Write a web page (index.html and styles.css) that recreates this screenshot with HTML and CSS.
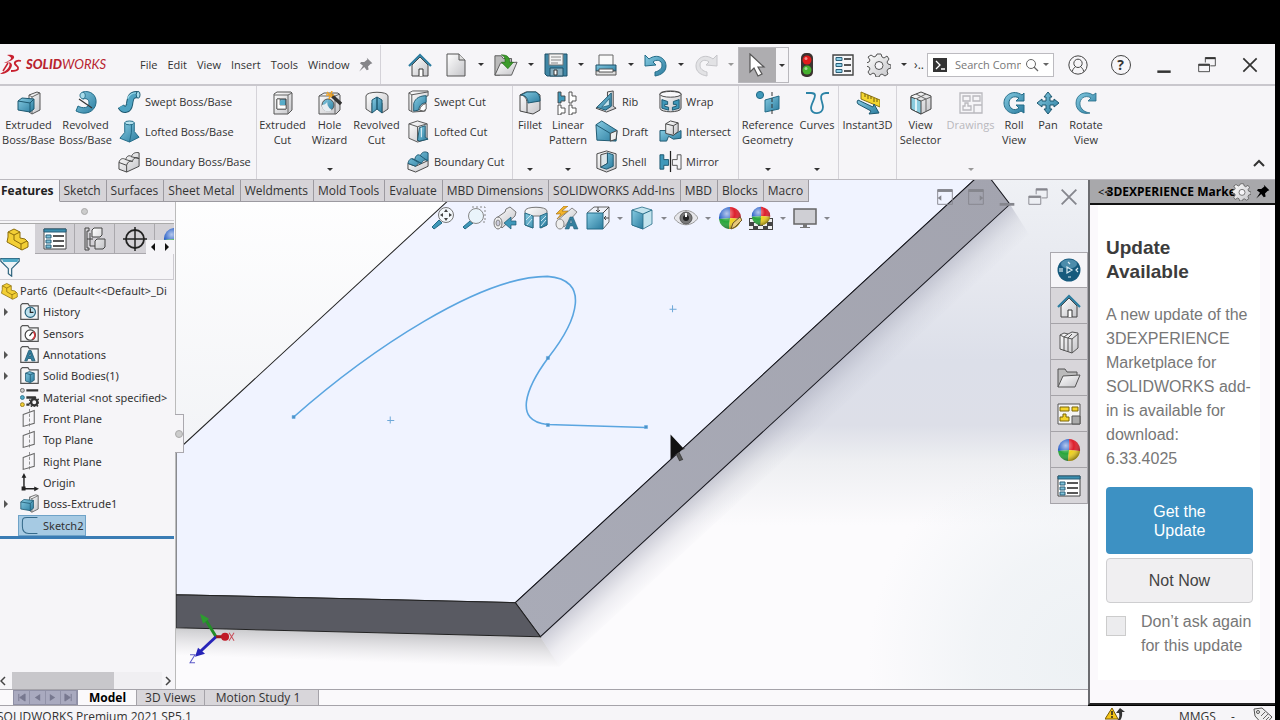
FILE: index.html
```
<!DOCTYPE html>
<html lang="en">
<head>
<meta charset="utf-8">
<title>SOLIDWORKS Premium 2021</title>
<link rel="stylesheet" href="styles.css">
</head>
<body>
<svg class="defs" aria-hidden="true">
  <defs>
    <linearGradient id="blue" x1="0" y1="0" x2="1" y2="1"><stop offset="0" stop-color="#86cbe2"/><stop offset="1" stop-color="#2b7c9f"/></linearGradient>
    <linearGradient id="grey" x1="0" y1="0" x2="1" y2="1"><stop offset="0" stop-color="#ffffff"/><stop offset="1" stop-color="#c4c4c8"/></linearGradient>
    <radialGradient id="shine" cx=".35" cy=".3" r=".75"><stop offset="0" stop-color="#fff" stop-opacity=".65"/><stop offset=".5" stop-color="#fff" stop-opacity="0"/><stop offset="1" stop-color="#000" stop-opacity=".45"/></radialGradient>
  </defs>
  <symbol id="i-extrude" viewBox="0 0 24 24"><path d="M12 4l8-3 3 1v17l-8 4-3-2z" fill="url(#grey)" stroke="#555"/><path d="M15 6l8-4M15 6v17M12 4l3 2" fill="none" stroke="#666"/><path d="M1 10l4-3 12 1v10l-4 3-12-2z" fill="url(#blue)" stroke="#1d5870"/><path d="M1 10l12 2v9M13 12l4-4" fill="none" stroke="#1d5870"/></symbol>
  <symbol id="i-revolve" viewBox="0 0 24 24"><path d="M9 1C16-1 23 4 22 12 21 21 11 25 2 20l2-5c5 3 11 2 11-3 0-4-3-5-6-4z" fill="url(#blue)" stroke="#236b87"/><path d="M9 1c-4 1-4 6 0 7 3-1 3-6 0-7z" fill="#a8ddec" stroke="#236b87"/><path d="M5 8l13 9" stroke="#333" stroke-width="1.2"/></symbol>
  <symbol id="i-swept" viewBox="0 0 24 24"><path d="M3 17c3 5 8 4 9-2 1-7 2-11 9-10" fill="none" stroke="#1d5870" stroke-width="7.500"/><path d="M3 17c3 5 8 4 9-2 1-7 2-11 9-10" fill="none" stroke="#4fa3c2" stroke-width="5.500"/><path d="M10 9c2-5 5-6 9-6" stroke="#97d5e6" stroke-width="1.500" fill="none"/><ellipse cx="21" cy="5" rx="2" ry="3.500" fill="#a8ddec" stroke="#1d5870"/></symbol>
  <symbol id="i-loft" viewBox="0 0 24 24"><path d="M7 3v10l-5 6 10 4 10-5-5-6V3z" fill="url(#blue)" stroke="#236b87"/><path d="M12 23l2-10V4" stroke="#236b87" fill="none"/><ellipse cx="12" cy="3" rx="5" ry="2" fill="#b7e2ee" stroke="#236b87"/></symbol>
  <symbol id="i-boundary" viewBox="0 0 24 24"><path d="M1 13c1-4 4-5 7-3 1-4 4-5 6-3 1-4 5-5 8-4v14L9 23l-8-3z" fill="url(#grey)" stroke="#444"/><path d="M1 13l8 3c1-4 4-5 6-4 1-4 4-5 7-3M9 16v7M8 10l7 2M14 7l8 2" fill="none" stroke="#444"/></symbol>
  <symbol id="i-boundcut" viewBox="0 0 24 24"><path d="M1 14l8 3 13-6v6L9 23l-8-3z" fill="url(#grey)" stroke="#444"/><path d="M1 14c1-5 4-6 7-4 1-5 4-6 6-4 1-4 5-5 8-3v8c-3-1-5-1-7 3-2-1-4 0-6 3z" fill="url(#blue)" stroke="#1d5870"/><path d="M8 10l7 4M14 6l7 5M5 9l7 4" fill="none" stroke="#1d5870"/></symbol>
  <symbol id="i-cut" viewBox="0 0 24 24"><path d="M3 3l3-2h14l1 1v17l-4 4H3z" fill="url(#grey)" stroke="#555"/><path d="M3 4h14v19M17 4l4-2" fill="none" stroke="#666"/><path d="M6 8h9v10H6z" fill="url(#blue)" stroke="#333"/><path d="M9 8v6h6v4H6V8z" fill="#fff" stroke="#555" stroke-width=".7"/><path d="M9 10h5v4H9z" fill="#57acc9"/></symbol>
  <symbol id="i-hole" viewBox="0 0 24 24"><path d="M1 5l5-3h14l2 2v15l-4 4H1z" fill="url(#grey)" stroke="#555"/><path d="M1 5h16v18M17 5l5-2" fill="none" stroke="#666"/><circle cx="10" cy="14" r="6" fill="url(#blue)" stroke="#555"/><path d="M10 8a6 6 0 0 1-6 6 6 6 0 0 0 10 5 8 8 0 0 1-4-11z" fill="#e8eef2"/><path d="M12 3l11 10" stroke="#333" stroke-width="3.500"/><path d="M9 1l5 5M14 0l-3 8M8 4h8" stroke="#eda52d" stroke-width="1.600"/></symbol>
  <symbol id="i-revcut" viewBox="0 0 24 24"><path d="M1 5c0-5 22-5 22 0v13l-6 4V12l-5-5-5 5v10l-6-4z" fill="url(#grey)" stroke="#555"/><path d="M12 6v12l-5 4V9zM12 6v12l5 4V9z" fill="url(#blue)" stroke="#1d5870"/></symbol>
  <symbol id="i-sweptcut" viewBox="0 0 24 24"><path d="M2 3l4-2h16v5l-3 1v15L6 23l-4-2z" fill="url(#grey)" stroke="#555"/><path d="M2 3l3 2v17M5 5l17-3" stroke="#555" fill="none"/><path d="M7 22V14C9 8 14 6 20 6v7c-5 1-7 3-8 8z" fill="url(#blue)" stroke="#1d5870"/><path d="M13 21c1-4 3-6 7-7v6l-3 2z" fill="#fff" stroke="#555"/></symbol>
  <symbol id="i-loftcut" viewBox="0 0 24 24"><path d="M2 4l9-3 10 3v16l-10 3-9-4z" fill="url(#grey)" stroke="#555"/><path d="M2 4l9 3v15M11 7l10-3" stroke="#555" fill="none"/><path d="M13 8l6-2v12l3 2-9 2-2-1z" fill="url(#blue)" stroke="#1d5870"/><path d="M15 8v10" stroke="#e8f6fa"/></symbol>
  <symbol id="i-fillet" viewBox="0 0 24 24"><path d="M2 4l6-3h10l4 3v15l-7 4-13-3z" fill="url(#grey)" stroke="#444"/><path d="M9 22V12C9 7 6 4 2 4" fill="none" stroke="#444"/><path d="M3 4l6-3h9c3 2 4 5 4 9l-12 2c0-5-3-8-7-8z" fill="url(#blue)" stroke="#1d5870"/></symbol>
  <symbol id="i-pattern" viewBox="0 0 24 24"><g stroke="#444" stroke-width=".9"><path d="M2 1h3v4h4v5H5v2H2z" fill="#3f98ba"/><path d="M13 1h3v4h4v5h-4v2h-3zM2 14h3v3h4v5H5v2H2zM13 14h3v3h4v5h-4v2h-3z" fill="#fff"/></g></symbol>
  <symbol id="i-rib" viewBox="0 0 24 24"><path d="M13 2l6-1v16l3 2-10 4-11-4 5-4h7z" fill="url(#grey)" stroke="#444"/><path d="M2 18L17 3v14l-6 4z" fill="url(#blue)" stroke="#1d5870"/><path d="M7 18l8-9v7z" fill="#c8e6f0" stroke="#1d5870" stroke-width=".7"/></symbol>
  <symbol id="i-draft" viewBox="0 0 24 24"><path d="M1 5l6-4 16 10-1 11-20-1z" fill="url(#blue)" stroke="#1d5870"/><path d="M1 5l15 9v8" fill="none" stroke="#1d5870"/><path d="M16 14l7-3-1 9-6 2z" fill="#eee" stroke="#444"/></symbol>
  <symbol id="i-shell" viewBox="0 0 24 24"><path d="M2 4l10-3 10 3v15l-10 4-10-4z" fill="url(#grey)" stroke="#444"/><path d="M6 5l7-2v11l-7 4z" fill="#dce6ea" stroke="#444"/><path d="M13 3l6 2v12l-7 3-6-2 7-4z" fill="url(#blue)" stroke="#1d5870"/></symbol>
  <symbol id="i-wrap" viewBox="0 0 24 24"><path d="M1 4c0-4 22-4 22 0v15c0 5-22 5-22 0z" fill="url(#grey)" stroke="#444"/><ellipse cx="12" cy="4.500" rx="11" ry="3" fill="#f8f8fa" stroke="#444"/><path d="M3 10l6 2v3H6v2l4 1v3l-7-2zM21 10l-6 2v3h3v2l-4 1v3l7-2z" fill="#3f98ba" stroke="#1d5870"/></symbol>
  <symbol id="i-intersect" viewBox="0 0 24 24"><path d="M1 11h8l5 5 9-5v8l-8 1-5-3-2 5H1z" fill="url(#blue)" stroke="#1d5870"/><path d="M7 4l5-3 8 2v9l-5 4-8-2z" fill="url(#grey)" stroke="#444"/><path d="M7 4l8 2v9M15 6l5-3" stroke="#444" fill="none"/></symbol>
  <symbol id="i-mirror" viewBox="0 0 24 24"><path d="M1 5h4v5h5v6H5v4H1z" fill="#3f98ba" stroke="#1d5870"/><path d="M23 5h-4v5h-5v6h5v4h4z" fill="#f5f5f7" stroke="#555"/><path d="M12 1v22" stroke="#222" stroke-width="1.300"/></symbol>
  <symbol id="i-refgeo" viewBox="0 0 24 24"><circle cx="4" cy="4" r="3.600" fill="#3f98ba" stroke="#236b87"/><path d="M9 9l14-4v13L9 21z" fill="url(#blue)" stroke="#236b87"/><path d="M16 1v22" stroke="#333" stroke-dasharray="4 2"/></symbol>
  <symbol id="i-curves" viewBox="0 0 24 24"><path d="M1 2h5c9 0 0 9 0 15 0 7 12 7 12-1 0-5-6-13 3-14h3" fill="none" stroke="#2c83a6" stroke-width="1.800"/></symbol>
  <symbol id="i-instant" viewBox="0 0 24 24"><path d="M5 1l19 8v7L5 8z" fill="#f4d62f" stroke="#8c7415"/><path d="M9 3v3M12 4v4M15 5v3M18 7v4M21 8v3" stroke="#6e5a0e"/><path d="M1 11l1-2 15 7 1-3 5 9-10 1 2-3-13-7z" fill="url(#blue)" stroke="#1d5870"/></symbol>
  <symbol id="i-viewsel" viewBox="0 0 24 24"><path d="M2 5l10-4 10 4v13l-10 5-10-5z" fill="url(#grey)" stroke="#444"/><path d="M2 6l10 4v13l-10-5z" fill="#8accdf" stroke="#444"/><path d="M7 8v12" stroke="#dff2f8" stroke-width="2"/><path d="M12 10l10-4M7 3l10 5v12M17 3L7 8" fill="none" stroke="#666"/></symbol>
  <symbol id="i-drawings" viewBox="0 0 24 24"><path d="M1 2h22v20H1zM4 5h7v5H4zM14 5h7v5h-7zM4 19v-4h2v-3h3v3h3v4zM15 14h8v8h-8z" fill="none" stroke="currentColor" stroke-width="1.300"/></symbol>
  <symbol id="i-roll" viewBox="0 0 24 24"><path d="M22 22v-8h-8l3 3c-5 4-10 0-10-5s5-8 10-5l-3 3h8V2l-2 2C11-2 2 4 2 12s9 14 17 8z" fill="url(#blue)" stroke="#236b87"/></symbol>
  <symbol id="i-pan" viewBox="0 0 24 24"><path d="M12 1l4 5h-2v4h4V8l5 4-5 4v-2h-4v4h2l-4 5-4-5h2v-4H6v2l-5-4 5-4v2h4V6H8z" fill="url(#blue)" stroke="#1d5870"/></symbol>
  <symbol id="i-rotate" viewBox="0 0 24 24"><path d="M22 2v8h-8l3-3C11 3 5 8 6 14c1 4 4 7 10 8C8 24 2 19 2 12 2 3 12-1 19 4z" fill="url(#blue)" stroke="#236b87" stroke-width=".8"/></symbol>
  <symbol id="i-home" viewBox="0 0 24 24"><path d="M4 12v11h16V12l-8-8z" fill="url(#grey)" stroke="#444"/><path d="M1 13L12 2l11 11" fill="none" stroke="#2b7c9f" stroke-width="2.200"/><path d="M11 23v-7h4v7" fill="#fff" stroke="#333"/></symbol>
  <symbol id="i-new" viewBox="0 0 24 24"><path d="M3 1h12l6 6v16H3z" fill="url(#grey)" stroke="#555"/><path d="M15 1v6h6" fill="#ddd" stroke="#555"/></symbol>
  <symbol id="i-open" viewBox="0 0 26 24"><path d="M1 2h7l2 3h9v6L6 23H1z" fill="#bbb" stroke="#555"/><path d="M7 10l18-1-6 14H1z" fill="url(#grey)" stroke="#555"/><path d="M8 1c7 0 9 3 9 8h4l-6 7-7-7h4c0-4 0-6-4-8z" fill="#3c9c2b" stroke="#246b18" stroke-width=".7"/></symbol>
  <symbol id="i-save" viewBox="0 0 24 24"><path d="M1 1h22v22H3l-2-2z" fill="#3f86a5" stroke="#1d4e66"/><path d="M5 1h14v11H5z" fill="#f4f4f4" stroke="#777"/><path d="M7 4h10M7 7h10M7 10h7" stroke="#888"/><path d="M6 15h13v8H6z" fill="#86adbe" stroke="#1d4e66"/><path d="M10 17h3v5h-3z" fill="#fff" stroke="#333"/></symbol>
  <symbol id="i-print" viewBox="0 0 24 24"><path d="M5 2h14v11H5z" fill="#fafafa" stroke="#666"/><path d="M2 12h20v6H2z" fill="url(#blue)" stroke="#1d4e66"/><path d="M2 18h20v4H2z" fill="#ddd" stroke="#555"/><path d="M5 16h14v3H5z" fill="#fff" stroke="#555"/></symbol>
  <symbol id="i-undo" viewBox="0 0 24 24"><path d="M1 2l4 4C13 0 22 5 22 13c0 6-5 9-11 10v-4c4-1 7-3 7-7 0-5-6-6-9-3l3 3-11 1z" fill="url(#blue)" stroke="#236b87"/></symbol>
  <symbol id="i-redo" viewBox="0 0 24 24"><path d="M23 2l-4 4C11 0 2 5 2 13c0 6 5 9 11 10v-4c-4-1-7-3-7-7 0-5 6-6 9-3l-3 3 11 1z" fill="#e2e2e5" stroke="#c6c6ca"/></symbol>
  <symbol id="i-arrow" viewBox="0 0 24 24"><path d="M4 1v18l4-4 4 8 4-2-4-7h6z" fill="#fff" stroke="#555" stroke-width="1.200"/></symbol>
  <symbol id="i-traffic" viewBox="0 0 24 24"><rect x="6" y="0" width="12" height="24" rx="5" fill="#3b3330"/><circle cx="12" cy="7" r="4.500" fill="#e11b1b"/><circle cx="12" cy="17" r="4.500" fill="#45b02f"/><circle cx="11" cy="5.500" r="1.500" fill="#fff" opacity=".5"/><circle cx="11" cy="15.500" r="1.500" fill="#fff" opacity=".5"/></symbol>
  <symbol id="i-options" viewBox="0 0 24 24"><path d="M2 2h20v20H2z" fill="#f7f7f9" stroke="#444" stroke-width="1.400"/><path d="M5 4.500h6v3H5zM5 10.500h6v3H5zM5 16.500h6v3H5z" fill="#8fd0e8" stroke="#2b5f78"/><path d="M13 6h7M13 12h7M13 18h7" stroke="#222" stroke-width="1.500"/></symbol>
  <symbol id="i-gear" viewBox="0 0 24 24"><path d="M10 1h4l1 3 2 1 3-2 2 3-2 3 1 2 3 1v3l-3 1-1 2 1 3-3 2-3-2-2 1-1 2h-3l-1-3-2-1-3 2-2-3 2-3-1-2-3-1v-3l3-1 1-2-2-3 3-2 3 2 2-1z" fill="url(#grey)" stroke="#555"/><circle cx="12" cy="12.500" r="4" fill="#f6f5f8" stroke="#555"/></symbol>
  <symbol id="i-user" viewBox="0 0 24 24"><circle cx="12" cy="12" r="11" fill="none" stroke="#444" stroke-width="1.200"/><circle cx="12" cy="10" r="5" fill="none" stroke="#444" stroke-width="1.200"/><path d="M5 20c1-4 3-5 4-6M19 20c-1-4-3-5-4-6" fill="none" stroke="#444" stroke-width="1.200"/></symbol>
  <symbol id="i-restore" viewBox="0 0 24 24"><path d="M10 9V3h12v10h-6" fill="none" stroke="currentColor"/><path d="M10 4h12" stroke="currentColor" stroke-width="2"/><path d="M2 11h13v9H2z" fill="none" stroke="currentColor"/><path d="M2 12h13" stroke="currentColor" stroke-width="2"/></symbol>
  <symbol id="i-close" viewBox="0 0 24 24"><path d="M4 4l16 16M20 4L4 20" stroke="currentColor" stroke-width="2"/></symbol>
  <symbol id="i-min" viewBox="0 0 24 24"><path d="M4 20h16" stroke="currentColor" stroke-width="3"/></symbol>
  <symbol id="i-pin" viewBox="0 0 24 24"><path d="M14 1l9 9-3 1-4 4 1 5-3 1-4-5-8 7 6-9-5-4 2-2h5l5-4z" fill="currentColor"/></symbol>
  <symbol id="i-part" viewBox="0 0 24 24"><path d="M3 5l6-3 6 3v6l5 1 3 3v5l-6 3L2 15l1-5z" fill="#f3cf35" stroke="#8b6d0c"/><path d="M3 5l6 3v5l7 4 6-3M9 8l6-3M16 17v6" stroke="#8b6d0c" fill="none"/></symbol>
  <symbol id="i-list" viewBox="0 0 24 24"><path d="M1 2h22v20H1z" fill="#fff" stroke="#444"/><path d="M1 2h22v3H1z" fill="#3a8eae" stroke="#2b5f78"/><path d="M3 8h5v3H3zM3 13h5v3H3zM3 18h5v3H3z" fill="#7fc3da" stroke="#2b5f78"/><path d="M10 9h11M10 14h11M10 19h11" stroke="#222" stroke-width="1.500"/></symbol>
  <symbol id="i-config" viewBox="0 0 24 24"><path d="M2 1h4v3H4v17h2v2H2zM4 12h6M7 6v13h5" stroke="#444" fill="none"/><path d="M9 3l2-2h8v7l-2 2H9zM12 14l2-2h8v8l-2 2h-8z" fill="url(#grey)" stroke="#444"/></symbol>
  <symbol id="i-target" viewBox="0 0 24 24"><circle cx="12" cy="12" r="9" fill="none" stroke="#222" stroke-width="1.800"/><path d="M12 0v24M0 12h24" stroke="#222" stroke-width="1.500"/></symbol>
  <symbol id="i-funnel" viewBox="0 0 24 24"><path d="M1 2h22v3l-9 9v9l-4-3v-6L1 5z" fill="#eef3f6" stroke="#2a607a" stroke-width="1.400"/><path d="M2 2h20l-1 4H4z" fill="#4fa9c6"/></symbol>
  <symbol id="i-folder" viewBox="0 0 24 24"><path d="M1 22V4l2-2h7l2 3h11v17z" fill="#f5f5f6" stroke="#555" stroke-width="1.500"/></symbol>
  <symbol id="i-history" viewBox="0 0 24 24"><use href="#i-folder"/><circle cx="13" cy="13" r="6.500" fill="#bde0ec" stroke="#26637d" stroke-width="1.500"/><path d="M13 8v5h4" stroke="#222" fill="none" stroke-width="1.500"/></symbol>
  <symbol id="i-sensor" viewBox="0 0 24 24"><use href="#i-folder"/><circle cx="13" cy="14" r="6.500" fill="#fff" stroke="#444" stroke-width="1.500"/><path d="M12 15l4-5" stroke="#222" stroke-width="1.500"/><path d="M17 10c3 3 2 7-1 9" stroke="#d4353b" stroke-width="2" fill="none"/></symbol>
  <symbol id="i-annot" viewBox="0 0 24 24"><use href="#i-folder"/><path d="M6 20l5-13h3l5 13h-4l-1-3h-4l-1 3zM11 14h3l-1-4z" fill="#35809f" stroke="#1d5870" fill-rule="evenodd"/></symbol>
  <symbol id="i-solid" viewBox="0 0 24 24"><use href="#i-folder"/><path d="M7 9l5-2 6 2v9l-5 3-6-2z" fill="url(#blue)" stroke="#1d5870"/><path d="M7 9l6 2v9M13 11l5-2" stroke="#1d5870" fill="none"/></symbol>
  <symbol id="i-material" viewBox="0 0 24 24"><circle cx="3" cy="3" r="2.500" fill="#ccc" stroke="#555"/><circle cx="3" cy="12" r="2.500" fill="#4fa9c6" stroke="#236b87"/><circle cx="3" cy="21" r="2.500" fill="#f0cf35" stroke="#8b6d0c"/><path d="M8 3h15M8 12h12M8 21h4" stroke="#333" stroke-width="3"/><circle cx="18" cy="18" r="4" fill="none" stroke="#333" stroke-width="3"/><circle cx="18" cy="18" r="6" fill="none" stroke="#333" stroke-width="2" stroke-dasharray="2 2"/></symbol>
  <symbol id="i-plane" viewBox="0 0 24 24"><path d="M4 7l14-5v16L4 22z" fill="none" stroke="#666" stroke-width="1.300"/><path d="M12 0v24" stroke="#777" stroke-dasharray="4 2"/></symbol>
  <symbol id="i-origin" viewBox="0 0 24 24"><path d="M5 4v16h15" fill="none" stroke="#222" stroke-width="1.800"/><path d="M5 0l3 6H2zM24 20l-6-3v6zM2 17h5v5H2z" fill="#222"/></symbol>
  <symbol id="i-sketch" viewBox="0 0 24 24"><path d="M22 2H9C4 2 3 3 3 8v5c0 6 3 9 8 9h11" fill="none" stroke="#356a8a" stroke-width="1.300"/></symbol>
  <symbol id="i-ball" viewBox="0 0 24 24"><path d="M12 12V1A11 11 0 0 0 1 13z" fill="#2d63c9"/><path d="M12 12V1a11 11 0 0 1 11 12z" fill="#dd1f2c"/><path d="M12 12L1 13a11 11 0 0 0 10 10z" fill="#27a63a"/><path d="M12 12l11 1a11 11 0 0 1-12 10z" fill="#efd11c"/><circle cx="12" cy="12" r="11" fill="url(#shine)"/></symbol>
  <symbol id="i-lens" viewBox="0 0 24 24"><path d="M8 14l-7 7 2 2 8-6z" fill="#3f98ba" stroke="#236b87"/><circle cx="15" cy="9" r="7.500" fill="#f4f8fc" stroke="#777"/><path d="M13 6l2-3 2 3zM13 12l2 3 2-3zM12 7L9 9l3 2zM18 7l3 2-3 2z" fill="#444"/></symbol>
  <symbol id="i-lensbox" viewBox="0 0 24 24"><path d="M10 1h13v15h-4" fill="none" stroke="#888" stroke-dasharray="2 2"/><path d="M8 15l-7 6 2 2 8-6z" fill="#3f98ba" stroke="#236b87"/><circle cx="14" cy="10" r="7.500" fill="#eaf4fb" stroke="#888"/></symbol>
  <symbol id="i-scope" viewBox="0 0 24 24"><path d="M2 13L12 6l1-3 4-2 6 5-1 4-13 12z" fill="url(#grey)" stroke="#777"/><ellipse cx="5" cy="17" rx="4" ry="6" fill="#eee" stroke="#777"/><ellipse cx="5" cy="17" rx="2" ry="3" fill="#ccd" stroke="#888"/><path d="M23 15h-5v-4l-7 6 7 6v-4h5z" fill="#3f98ba" stroke="#1d5870" stroke-width=".7"/></symbol>
  <symbol id="i-section" viewBox="0 0 24 24"><path d="M1 5c0-5 22-5 22 0v14l-6 3V10H9v12l-8-3z" fill="url(#grey)" stroke="#777"/><path d="M1 7l8 3v12l-8-3zM16 10l7-3v12l-7 3z" fill="url(#blue)" stroke="#236b87"/><path d="M2 14l5-5M3 19l5-6M17 15l5-5M17 20l5-6" stroke="#cfeaf3"/></symbol>
  <symbol id="i-dynamic" viewBox="0 0 24 24"><path d="M2 15L17 2l5 4L9 21z" fill="url(#grey)" stroke="#888"/><ellipse cx="5" cy="18" rx="4" ry="5" fill="#eee" stroke="#888"/><path d="M9 0L1 8h5l-4 5 11-8H7l6-5z" fill="#f2b32a" stroke="#986a10" stroke-width=".6"/><path d="M10 23l5-12h3l5 12h-4l-1-3h-3l-1 3zM15 17h2l-1-4z" fill="#35809f" stroke="#1d5870" stroke-width=".5" fill-rule="evenodd"/></symbol>
  <symbol id="i-orient" viewBox="0 0 24 24"><path d="M1 7l7-6h15v15l-6 7" fill="#eef1f8" stroke="#666"/><path d="M1 7h16v16H1z" fill="url(#blue)" stroke="#236b87"/><path d="M17 7l6-6M12 1v5l-2-2M12 6l2-2M23 12h-5l2-2M18 12l2 2" stroke="#444" fill="none"/></symbol>
  <symbol id="i-cube" viewBox="0 0 24 24"><path d="M2 4l10-3 10 3v14l-9 5-11-4z" fill="#c3e4ee" stroke="#236b87" stroke-width=".8"/><path d="M2 4l11 4v15l-11-4z" fill="url(#blue)" stroke="#236b87" stroke-width=".8"/><path d="M13 8l9-4" stroke="#236b87"/></symbol>
  <symbol id="i-eye" viewBox="0 0 24 24"><path d="M0 12c6-10 18-10 24 0-6 9-18 9-24 0z" fill="#e6e6ea" stroke="#999"/><circle cx="12" cy="12" r="6" fill="#777" stroke="#555"/><circle cx="12" cy="12" r="3" fill="#222"/><path d="M12 7v4" stroke="#fff" stroke-width="2"/></symbol>
  <symbol id="i-appear" viewBox="0 0 24 24"><use href="#i-ball"/><path d="M13 23l2-6 7-6 2 3-7 7z" fill="#e8c977" stroke="#6d5527"/></symbol>
  <symbol id="i-scene" viewBox="0 0 24 24"><path d="M0 12h24v12H0z" fill="#444"/><path d="M1 13h4v3H1zM19 13h4v3h-4zM5 17h4v3H5zM14 17h4v3h-4zM0 20h4v3H0zM9 20h5v3H9zM19 20h4v3h-4z" fill="#eee"/><svg x="2" y="0" width="20" height="20"><use href="#i-ball" width="20" height="20"/></svg></symbol>
  <symbol id="i-monitor" viewBox="0 0 24 24"><path d="M1 3h22v15H1z" fill="#cfcfd4" stroke="#666" stroke-width="1.500"/><path d="M10 18v3H7v1h10v-1h-3v-3" fill="#777"/></symbol>
  <symbol id="i-compass" viewBox="0 0 24 24"><circle cx="12" cy="12" r="11.500" fill="#165a7d"/><ellipse cx="12" cy="6" rx="8" ry="4.500" fill="#6aa7c4" opacity=".65"/><path d="M10 9l5 3-5 3zM3 10v4M5 10v4M21 10l-2 2 2 2M11 19h3M11 4l2 2" fill="none" stroke="#d8eaf2" stroke-width="1.200"/></symbol>
  <symbol id="i-books" viewBox="0 0 24 24"><path d="M3 5l4-2 4 1 4-2 6 1v15l-6 5-12-4z" fill="url(#grey)" stroke="#555"/><path d="M3 5l4 2 4-3M7 7v14M7 7l4 1 4-4M11 8v14M11 8l4 1 6-5M15 9v14" fill="none" stroke="#555"/></symbol>
  <symbol id="i-dir" viewBox="0 0 24 24"><path d="M1 21V3h7l2 3h10v5" fill="#bbb" stroke="#555"/><path d="M6 10l17-1-5 12H1z" fill="url(#grey)" stroke="#555"/></symbol>
  <symbol id="i-palette" viewBox="0 0 24 24"><path d="M1 2h22v20H1z" fill="#f5f5f5" stroke="#555"/><path d="M3 5h9v4H3zM15 5h6v4h-6zM3 19v-4h3v-3h3v3h3v4z" fill="#f5d52c" stroke="#7b6508"/><path d="M15 14h8v8h-8z" fill="#aaa" stroke="#555"/></symbol>
  <symbol id="i-pane-l" viewBox="0 0 24 24"><path d="M4 4h16v16H4z" fill="none" stroke="currentColor"/><path d="M4 5h16" stroke="currentColor" stroke-width="3"/><path d="M8 10v6l-4-3z" fill="currentColor"/></symbol>
  <symbol id="i-pane-r" viewBox="0 0 24 24"><path d="M4 4h16v16H4z" fill="none" stroke="currentColor"/><path d="M4 5h16" stroke="currentColor" stroke-width="3"/><path d="M16 10v6l4-3z" fill="currentColor"/></symbol>
</svg>

<div class="app">
  <header class="titlebar">
    <div class="brand">
      <svg class="ds" viewBox="0 0 22 22" aria-hidden="true"><path d="M7 1c4-1 8 0 7 3-1 2-4 3-7 4 5 0 6 3 4 6-2 4-6 6-11 6l3-2c4-1 8-7 6-9-1-1-3 0-5 0 4-2 7-3 7-5 0-1-2-2-4-3z" fill="#c8202f"/><path d="M8 9l-5 8" stroke="#c8202f" stroke-width="1.500"/><path d="M21 7c-4-1-7 1-6 3 1 2 4 2 3 5-1 2-4 2-7 2" fill="none" stroke="#c8202f" stroke-width="1.800"/></svg>
      <span class="brand-name"><b>SOLID</b>WORKS</span>
    </div>
    <nav class="menu"><button>File</button><button>Edit</button><button>View</button><button>Insert</button><button>Tools</button><button>Window</button></nav>
    <button class="pin" aria-label="Pin menu"><svg><use href="#i-pin"/></svg></button>
    <div class="quick">
      <button class="qi home" aria-label="Home"><svg><use href="#i-home"/></svg></button>
      <button class="qi" aria-label="New"><svg><use href="#i-new"/></svg></button><button class="dd" aria-label="New options"></button>
      <button class="qi" aria-label="Open"><svg><use href="#i-open"/></svg></button><button class="dd" aria-label="Open options"></button>
      <button class="qi" aria-label="Save"><svg><use href="#i-save"/></svg></button><button class="dd" aria-label="Save options"></button>
      <button class="qi" aria-label="Print"><svg><use href="#i-print"/></svg></button><button class="dd" aria-label="Print options"></button>
      <button class="qi" aria-label="Undo"><svg><use href="#i-undo"/></svg></button><button class="dd" aria-label="Undo options"></button>
      <button class="qi" aria-label="Redo" disabled><svg><use href="#i-redo"/></svg></button><button class="dd dim" aria-label="Redo options"></button>
      <div class="picker"><button class="select" aria-label="Select"><svg><use href="#i-arrow"/></svg></button><button class="dd" aria-label="Select options"></button></div>
      <button class="qi" aria-label="Rebuild"><svg><use href="#i-traffic"/></svg></button>
      <button class="qi" aria-label="File properties"><svg><use href="#i-options"/></svg></button>
      <button class="qi" aria-label="Options"><svg><use href="#i-gear"/></svg></button><button class="dd" aria-label="More options"></button>
      <span class="more">›..</span>
    </div>
    <div class="search">
      <svg class="prompt" viewBox="0 0 14 14" aria-hidden="true"><path d="M0 0h14v14H0z" fill="#333"/><path d="M3 3l4 4-4 4M8 11h4" fill="none" stroke="#fff" stroke-width="1.300"/></svg>
      <input type="text" aria-label="Search commands" placeholder="Search Comm">
      <svg class="mag" viewBox="0 0 14 14" aria-hidden="true"><circle cx="6" cy="6" r="4.500" fill="none" stroke="#666"/><path d="M9 9l4 4" stroke="#666" stroke-width="1.300"/></svg>
      <button class="dd small" aria-label="Search options"></button>
    </div>
    <div class="window-controls">
      <button aria-label="Account"><svg><use href="#i-user"/></svg></button>
      <button aria-label="Help"><span class="help">?</span></button>
      <button aria-label="Minimize"><svg><use href="#i-min"/></svg></button>
      <button aria-label="Restore"><svg><use href="#i-restore"/></svg></button>
      <button aria-label="Close"><svg><use href="#i-close"/></svg></button>
    </div>
  </header>

  <section class="ribbon" aria-label="Features commands">
    <div class="group">
      <button class="big w57"><svg><use href="#i-extrude"/></svg>Extruded<br>Boss/Base</button>
      <button class="big w57"><svg><use href="#i-revolve"/></svg>Revolved<br>Boss/Base</button>
      <div class="stack wide">
        <button><svg><use href="#i-swept"/></svg>Swept Boss/Base</button>
        <button><svg><use href="#i-loft"/></svg>Lofted Boss/Base</button>
        <button><svg><use href="#i-boundary"/></svg>Boundary Boss/Base</button>
      </div>
    </div>
    <div class="group pad">
      <button class="big w47"><svg><use href="#i-cut"/></svg>Extruded<br>Cut</button>
      <button class="big w47 drop"><svg><use href="#i-hole"/></svg>Hole<br>Wizard</button>
      <button class="big w47"><svg><use href="#i-revcut"/></svg>Revolved<br>Cut</button>
      <div class="stack cuts">
        <button><svg><use href="#i-sweptcut"/></svg>Swept Cut</button>
        <button><svg><use href="#i-loftcut"/></svg>Lofted Cut</button>
        <button><svg><use href="#i-boundcut"/></svg>Boundary Cut</button>
      </div>
    </div>
    <div class="group">
      <button class="big w34 drop"><svg><use href="#i-fillet"/></svg>Fillet</button>
      <button class="big w42 drop"><svg><use href="#i-pattern"/></svg>Linear<br>Pattern</button>
      <div class="stack mid">
        <button><svg><use href="#i-rib"/></svg>Rib</button>
        <button><svg><use href="#i-draft"/></svg>Draft</button>
        <button><svg><use href="#i-shell"/></svg>Shell</button>
      </div>
      <div class="stack ops">
        <button><svg><use href="#i-wrap"/></svg>Wrap</button>
        <button><svg><use href="#i-intersect"/></svg>Intersect</button>
        <button><svg><use href="#i-mirror"/></svg>Mirror</button>
      </div>
    </div>
    <div class="group">
      <button class="big w57 drop"><svg><use href="#i-refgeo"/></svg>Reference<br>Geometry</button>
      <button class="big w42 drop"><svg><use href="#i-curves"/></svg>Curves</button>
    </div>
    <div class="group">
      <button class="big w57"><svg><use href="#i-instant"/></svg>Instant3D</button>
    </div>
    <div class="group last">
      <button class="big w47"><svg><use href="#i-viewsel"/></svg>View<br>Selector</button>
      <button class="big w53 drop" disabled><svg><use href="#i-drawings"/></svg>Drawings</button>
      <button class="big w34"><svg><use href="#i-roll"/></svg>Roll<br>View</button>
      <button class="big w34"><svg><use href="#i-pan"/></svg>Pan</button>
      <button class="big w42"><svg><use href="#i-rotate"/></svg>Rotate<br>View</button>
    </div>
    <button class="collapse" aria-label="Collapse ribbon"><svg viewBox="0 0 12 8"><path d="M1 7l5-5 5 5" fill="none" stroke="#333" stroke-width="2"/></svg></button>
  </section>

  <main class="workspace">
    <section class="viewport" aria-label="Graphics area">
      <svg class="scene" viewBox="176 180 911 510" preserveAspectRatio="xMidYMid slice" role="img" aria-label="Part with sketch">
        <defs>
          <linearGradient id="bg" x1="0" y1="0" x2="0" y2="1"><stop offset="0" stop-color="#fff"/><stop offset=".5" stop-color="#f3f4f7"/><stop offset=".9" stop-color="#fdfdfe"/></linearGradient>
          <linearGradient id="bgr" x1="0" y1="0" x2="0" y2="1"><stop offset="0" stop-color="#eff1f5"/><stop offset=".22" stop-color="#e6e8ef"/><stop offset=".4" stop-color="#dcdfe9"/><stop offset=".54" stop-color="#dddfe8"/><stop offset=".62" stop-color="#eeeff2"/><stop offset=".76" stop-color="#fcfbfd"/><stop offset="1" stop-color="#fcfbfd"/></linearGradient>
          <radialGradient id="corner" gradientUnits="userSpaceOnUse" cx="1087" cy="660" r="220"><stop offset="0" stop-color="#edf1f4"/><stop offset=".5" stop-color="#edf1f4" stop-opacity=".7"/><stop offset="1" stop-color="#edf1f4" stop-opacity="0"/></radialGradient>
          <linearGradient id="side" x1="0" y1="1" x2="1" y2="0"><stop offset="0" stop-color="#a9abb7"/><stop offset="1" stop-color="#a3a4af"/></linearGradient>
          <linearGradient id="cast" gradientUnits="userSpaceOnUse" x1="775" y1="421" x2="800" y2="448"><stop offset="0" stop-color="#9fa1b3" stop-opacity=".5"/><stop offset=".5" stop-color="#a8aaba" stop-opacity=".18"/><stop offset="1" stop-color="#b0b2c2" stop-opacity="0"/></linearGradient>
          <linearGradient id="under" gradientUnits="userSpaceOnUse" x1="360" y1="632" x2="359" y2="662"><stop offset="0" stop-color="#a8a8ac" stop-opacity=".65"/><stop offset="1" stop-color="#c8c8cc" stop-opacity="0"/></linearGradient>
        </defs>
        <path d="M176 180h911v510H176z" fill="url(#bg)"/>
        <path d="M540 180h547v455H540z" fill="url(#bgr)"/>
        <path d="M540 622h547v68H176v-55h364z" fill="#fcfbfd"/>
        <path d="M860 430h227v260H860z" fill="url(#corner)"/>
        <path d="M1009 205l19 30-469 432-19-30z" fill="url(#cast)"/>
        <path d="M176 628l364 9 19 30-383-4z" fill="url(#under)"/>
        <path d="M176 452L471 180h503L515 603l-339-8z" fill="#f0f3ff" stroke="#222"/>
        <path d="M515 603L974 180h16l19 25-469 432z" fill="url(#side)" stroke="#15151c"/>
        <path d="M176 595l339 8 25 34-364-9z" fill="#595a62" stroke="#222"/>
        <path d="M293 418C370 350 480 277 547 277 590 280 578 320 548 358 525 389 513 422 547 425L645 428" fill="none" stroke="#5aa5e0" stroke-width="1.600"/>
        <path d="M292 416h3v3h-3zM546 357h3v3h-3zM546 424h3v3h-3zM644 426h3v3h-3z" fill="#4d92c6" stroke="#5aa5e0" stroke-width=".5"/>
        <path d="M669 310h7M672 306v7M387 421h7M390 417v7" stroke="#6ea8d8"/>
        <path d="M678 452l4 8-3 1-4-8zM678 451l6-2" fill="#555" stroke="#444"/><path d="M670 435v25l5-5 8-6z" fill="#111"/>
        <path d="M216 637l-11-18" stroke="#238c27" stroke-width="3"/><path d="M200 614l9 5-6 5z" fill="#2d9c2f"/>
        <path d="M216 637l-16 15" stroke="#2724b8" stroke-width="3"/><path d="M195 657l3-9 7 6z" fill="#2724b8"/>
        <path d="M216 637h8" stroke="#9b1a1f" stroke-width="3"/><circle cx="225" cy="637" r="4" fill="#c11825"/>
        <path d="M229 633l5 8M234 633l-5 8" stroke="#c94c58"/><path d="M190 655h5l-5 8h5" fill="none" stroke="#5b59c8"/>
      </svg>
      <div class="hud">
        <button aria-label="Zoom to fit"><svg><use href="#i-lens"/></svg></button>
        <button aria-label="Zoom to area"><svg><use href="#i-lensbox"/></svg></button>
        <button aria-label="Previous view"><svg><use href="#i-scope"/></svg></button>
        <button aria-label="Section view"><svg><use href="#i-section"/></svg></button>
        <button aria-label="Dynamic annotation views"><svg><use href="#i-dynamic"/></svg></button>
        <button class="with-dd" aria-label="View orientation"><svg><use href="#i-orient"/></svg></button>
        <button class="with-dd" aria-label="Display style"><svg><use href="#i-cube"/></svg></button>
        <button class="with-dd" aria-label="Hide or show items"><svg><use href="#i-eye"/></svg></button>
        <button aria-label="Edit appearance"><svg><use href="#i-appear"/></svg></button>
        <button class="with-dd" aria-label="Apply scene"><svg><use href="#i-scene"/></svg></button>
        <button class="with-dd" aria-label="View settings"><svg><use href="#i-monitor"/></svg></button>
      </div>
      <div class="doc-controls">
        <button aria-label="Show left pane"><svg><use href="#i-pane-l"/></svg></button>
        <button aria-label="Show right pane"><svg><use href="#i-pane-r"/></svg></button>
        <button aria-label="Minimize document"><svg><use href="#i-min"/></svg></button>
        <button aria-label="Restore document"><svg><use href="#i-restore"/></svg></button>
        <button aria-label="Close document"><svg><use href="#i-close"/></svg></button>
      </div>
      <div class="task-tabs">
        <button class="on" aria-label="3DEXPERIENCE Marketplace"><svg><use href="#i-compass"/></svg></button>
        <button aria-label="Resources"><svg><use href="#i-home"/></svg></button>
        <button aria-label="Design library"><svg><use href="#i-books"/></svg></button>
        <button aria-label="File explorer"><svg><use href="#i-dir"/></svg></button>
        <button aria-label="View palette"><svg><use href="#i-palette"/></svg></button>
        <button aria-label="Appearances"><svg><use href="#i-ball"/></svg></button>
        <button aria-label="Custom properties"><svg><use href="#i-list"/></svg></button>
      </div>
      <span class="splitter"></span>
    </section>

    <nav class="cmd-tabs">
      <button class="on">Features</button><button>Sketch</button><button>Surfaces</button><button>Sheet Metal</button><button>Weldments</button><button>Mold Tools</button><button>Evaluate</button><button>MBD Dimensions</button><button>SOLIDWORKS Add-Ins</button><button>MBD</button><button>Blocks</button><button>Macro</button>
    </nav>

    <aside class="manager">
      <div class="grip"><i></i></div>
      <div class="mgr-tabs">
        <button class="on" aria-label="Feature tree"><svg><use href="#i-part"/></svg></button>
        <button aria-label="Properties"><svg><use href="#i-list"/></svg></button>
        <button aria-label="Configurations"><svg><use href="#i-config"/></svg></button>
        <button aria-label="Dimensions"><svg><use href="#i-target"/></svg></button>
        <button aria-label="Display"><svg><use href="#i-ball"/></svg></button>
        <div class="scrollers">
          <button aria-label="Previous tabs"><svg viewBox="0 0 8 8"><path d="M6 0v8L2 4z" fill="#111"/></svg></button>
          <button aria-label="Next tabs"><svg viewBox="0 0 8 8"><path d="M2 0v8l4-4z" fill="#111"/></svg></button>
        </div>
      </div>
      <div class="filter"><svg><use href="#i-funnel"/></svg></div>
      <ul class="tree">
        <li class="root"><svg><use href="#i-part"/></svg><span>Part6&nbsp; (Default&lt;&lt;Default&gt;_Di</span></li>
        <li class="exp"><svg><use href="#i-history"/></svg><span>History</span></li>
        <li><svg><use href="#i-sensor"/></svg><span>Sensors</span></li>
        <li class="exp"><svg><use href="#i-annot"/></svg><span>Annotations</span></li>
        <li class="exp"><svg><use href="#i-solid"/></svg><span>Solid Bodies(1)</span></li>
        <li><svg><use href="#i-material"/></svg><span>Material &lt;not specified&gt;</span></li>
        <li><svg><use href="#i-plane"/></svg><span>Front Plane</span></li>
        <li><svg><use href="#i-plane"/></svg><span>Top Plane</span></li>
        <li><svg><use href="#i-plane"/></svg><span>Right Plane</span></li>
        <li><svg><use href="#i-origin"/></svg><span>Origin</span></li>
        <li class="exp"><svg><use href="#i-extrude"/></svg><span>Boss-Extrude1</span></li>
        <li><div class="selected"><svg><use href="#i-sketch"/></svg><span>Sketch2</span></div></li>
      </ul>
      <div class="rollback"></div>
      <div class="hscroll">
        <button aria-label="Scroll left"><svg viewBox="0 0 8 10"><path d="M6 1L2 5l4 4" fill="none" stroke="#444" stroke-width="1.500"/></svg></button>
        <div class="track"><div class="thumb"></div></div>
        <button aria-label="Scroll right"><svg viewBox="0 0 8 10"><path d="M2 1l4 4-4 4" fill="none" stroke="#444" stroke-width="1.500"/></svg></button>
      </div>
    </aside>

    <nav class="doc-tabs">
      <div class="steps">
        <button aria-label="First tab"><svg viewBox="0 0 10 10"><path d="M2 1v8M9 1v8L3 5z" fill="#77788f" stroke="#77788f"/></svg></button>
        <button aria-label="Previous tab"><svg viewBox="0 0 10 10"><path d="M8 1v8L2 5z" fill="#77788f"/></svg></button>
        <button aria-label="Next tab"><svg viewBox="0 0 10 10"><path d="M2 1v8l6-4z" fill="#77788f"/></svg></button>
        <button aria-label="Last tab"><svg viewBox="0 0 10 10"><path d="M8 1v8M1 1v8l6-4z" fill="#77788f" stroke="#77788f"/></svg></button>
      </div>
      <button class="tab on">Model</button><button class="tab">3D Views</button><button class="tab last">Motion Study 1</button>
    </nav>

    <aside class="task-pane">
      <header><span class="chev">&lt;&lt;</span><h2>3DEXPERIENCE Marke</h2><button aria-label="Pane options"><svg><use href="#i-gear"/></svg></button><button aria-label="Pin pane"><svg class="pinned"><use href="#i-pin"/></svg></button></header>
      <div class="update">
        <h3>Update Available</h3>
        <p>A new update of the 3DEXPERIENCE Marketplace for SOLIDWORKS add-in is available for download: 6.33.4025</p>
        <button class="primary">Get the<br>Update</button>
        <button class="secondary">Not Now</button>
        <label><input type="checkbox"><span>Don’t ask again for this update</span></label>
      </div>
    </aside>
  </main>

  <footer class="status">
    <span class="product">SOLIDWORKS Premium 2021 SP5.1</span>
    <svg class="warn" viewBox="0 0 20 20" aria-hidden="true"><path d="M7 2l6 11H0z" fill="#f5c518" stroke="#7a5d00"/><path d="M7 5v4M7 10v2" stroke="#222" stroke-width="1.500"/><path d="M8 16c6-1 7-5 6-9h-3l4-5 5 4h-3c1 7-3 11-9 12z" fill="#333"/></svg>
    <span class="units">MMGS</span><span class="caret">-</span>
    <svg class="tag" viewBox="0 0 20 20" aria-hidden="true"><path d="M1 2l8-1 10 9-8 9L2 9z" fill="#eee" stroke="#555"/><circle cx="5" cy="5" r="1.500" fill="none" stroke="#555"/><path d="M8 9l4-4M10 12l5-5M12 14l4-4" stroke="#666"/></svg>
  </footer>
</div>
</body>
</html>
```
FILE: styles.css
```
* { box-sizing: border-box; }
body {
  margin: 0;
  height: 100vh;
  overflow: hidden;
  background: #000;
  color: #333;
  font: 12px/15px "Open Sans", "Noto Sans", sans-serif;
}
button { margin: 0; padding: 0; border: 0; background: none; color: inherit; font: inherit; }
svg { display: block; flex: none; }
.defs { position: absolute; width: 0; height: 0; }

.app { height: 100vh; padding: 44px 5px 0 0; display: flex; flex-direction: column; }

/* Title bar */
.titlebar { flex: none; height: 42px; display: flex; align-items: center; padding-top: 1px; background: #f6f5f8; border-bottom: 2px solid #c9c7cd; }
.brand { display: flex; align-items: center; gap: 4px; width: 134px; }
.ds { width: 22px; height: 22px; }
.brand-name { color: #b8232f; font-family: Lato, sans-serif; font-size: 13px; font-style: italic; }
.brand-name b { font-weight: 900; }
.menu { display: flex; width: 224px; padding-left: 6px; gap: 10px; font-size: 11px; }
.pin { width: 23px; height: 100%; border-right: 1px solid #d4d2d8; color: #858589; }
.pin svg { width: 15px; height: 15px; }
.quick { display: flex; align-items: center; height: 100%; padding-left: 21px; flex: none; }
.qi { width: 36px; height: 36px; display: grid; place-items: center; }
.qi svg { width: 24px; height: 24px; }
.dd { width: 14px; height: 36px; display: grid; place-items: center; }
.dd::after, .drop::after, .with-dd::after { content: ""; border: 3px solid transparent; border-top-color: #333; border-bottom: 0; }
.dd.dim::after { border-top-color: #999; }
.picker { display: flex; border: 1px solid #b9b8bd; height: 36px; width: 51px; }
.select { width: 37px; background: #aeadb0; display: grid; place-items: center; }
.select svg { width: 24px; height: 24px; }
.picker .dd { width: 12px; }
.more { width: 16px; text-align: center; }
.search { display: flex; align-items: center; flex: 1; min-width: 100px; max-width: 180px; height: 24px; padding-left: 5px; gap: 8px; border: 1px solid #bcbbc0; background: #fff; }
.prompt, .mag { width: 14px; height: 14px; }
.search input { flex: 1; min-width: 0; padding: 0; border: 0; outline: 0; background: none; color: #666; font: inherit; font-size: 11px; }
.search input::placeholder { color: #777; opacity: 1; }
.search .mag { margin: 0 -8px 0 -4px; }
.search .dd::after { border-top-color: #666; }
.window-controls { display: flex; margin-left: auto; padding: 0 4px 0 2px; color: #333; }
.window-controls button { width: 43px; height: 36px; display: grid; place-items: center; }
.window-controls svg { width: 20px; height: 20px; }
.help { width: 20px; border: 1px solid #444; border-radius: 50%; font-size: 14px; font-weight: 700; line-height: 18px; }

/* Ribbon */
.ribbon { flex: none; height: 94px; display: flex; background: #f6f5f8; border-bottom: 1px solid #bbb9bf; font-size: 11px; }
.group { display: flex; border-right: 1px solid #d5d3d9; }
.group.pad { padding-left: 2px; }
.group.last { border-right: 0; flex: 1; }
.big { display: flex; flex-direction: column; align-items: center; padding-top: 5px; white-space: nowrap; }
.big svg { width: 24px; height: 24px; margin-bottom: 2px; }
.big:disabled { color: #b9b8bd; }
.big.drop::after { margin-top: auto; margin-bottom: 8px; }
.big.drop:disabled::after { border-top-color: #999; }
.w34 { width: 34px; }
.w42 { width: 42px; }
.w47 { width: 47px; }
.w53 { width: 53px; }
.w57 { width: 57px; }
.stack { display: grid; grid-template-rows: repeat(3, 1fr); padding: 0 0 2px 4px; }
.stack button { display: flex; align-items: center; gap: 4px; white-space: nowrap; }
.stack svg { width: 23px; height: 23px; }
.wide { width: 142px; }
.cuts { width: 112px; padding-left: 7px; }
.mid { width: 64px; padding-left: 6px; }
.ops { width: 85px; padding-left: 6px; }
.collapse { align-self: flex-end; width: 32px; height: 32px; display: grid; place-items: center; }
.collapse svg { width: 12px; height: 8px; }

/* Workspace: the command tabs overlap the top of the graphics area */
.workspace { flex: 1; min-height: 0; display: grid; grid-template-columns: 175px 1fr 187px; grid-template-rows: 22px 1fr 17px; }
.viewport { grid-area: 1 / 2 / 3 / 3; position: relative; border-left: 1px solid #bbb; min-height: 0; }
.scene { width: 100%; height: 100%; }
.cmd-tabs { grid-area: 1 / 1 / 2 / 3; display: flex; justify-self: start; position: relative; }
.cmd-tabs button { padding: 0 5px 0 4px; background: #d6d4d8; border: solid #9c9aa0; border-width: 0 1px 1px 0; white-space: nowrap; }
.cmd-tabs .on { padding-left: 1px; background: #f6f5f8; border-bottom-color: #f6f5f8; font-weight: 700; color: #222; }

.manager { grid-area: 2 / 1 / 3 / 2; display: flex; flex-direction: column; min-height: 0; padding-right: 1px; background: #f6f5f8; }
.grip { height: 19px; padding-right: 6px; display: grid; place-items: center; border-bottom: 1px solid #cdcbd1; }
.grip i { width: 7px; height: 7px; border: 1px solid #aaa; border-radius: 50%; background: #ccc; }
.mgr-tabs { position: relative; display: flex; height: 31px; margin-top: 2px; overflow: hidden; border-top: 1px solid #aaa; }
.mgr-tabs > button { flex: none; width: 40px; display: grid; place-items: center; background: #d3d1d6; border: solid #aaa8ad; border-width: 0 1px 1px 0; }
.mgr-tabs > .on { width: 35px; background: #f6f5f8; border-color: #f6f5f8; }
.mgr-tabs svg { width: 24px; height: 24px; }
.scrollers { position: absolute; right: 0; bottom: 0; display: flex; background: #f6f5f8; }
.scrollers button { width: 14px; height: 14px; display: grid; place-items: center; }
.scrollers svg { width: 8px; height: 8px; }
.filter { height: 26px; padding: 3px 0; border: solid #cdcbd1; border-width: 0 1px 1px 0; }
.filter svg { width: 20px; height: 20px; }
.tree { list-style: none; margin: 0; padding: 0; height: 256px; display: grid; grid-template-rows: repeat(12, 1fr); font-family: "Noto Sans", "Open Sans", sans-serif; font-size: 11px; }
.tree li { display: flex; align-items: center; padding-left: 20px; gap: 4px; white-space: nowrap; position: relative; }
.tree li svg { width: 19px; height: 19px; }
.tree .root { padding-left: 0; gap: 2px; }
.tree .root svg { width: 18px; height: 18px; }
.exp::before { content: ""; position: absolute; left: 4px; border: 4px solid transparent; border-left-color: #555; border-right: 0; }
.selected { display: flex; align-items: center; gap: 4px; height: 21px; margin-left: -2px; padding: 0 2px 0 1px; background: #a6cae3; border: 1px solid #6fa3c8; }
.rollback { height: 3px; background: #3a7cb4; flex: none; }
.hscroll { display: flex; height: 17px; margin-top: auto; }
.hscroll button { width: 12px; display: grid; place-items: center; }
.hscroll button:first-child svg { margin-left: -6px; }
.hscroll svg { width: 8px; height: 10px; }
.track { flex: 1; background: #f0eff2; }
.thumb { width: 68%; height: 100%; background: #c8c7cb; }

.hud { position: absolute; left: 252px; top: 26px; display: flex; }
.hud button { display: flex; align-items: center; gap: 7px; width: 31px; padding-left: 3px; }
.hud .with-dd { width: 44px; }
.hud svg { width: 24px; height: 24px; }
.with-dd::after { border-top-color: #85868c; }
.doc-controls { position: absolute; right: 4px; top: 6px; display: flex; color: #85868d; }
.doc-controls button { width: 31px; display: grid; place-items: center; }
.doc-controls svg { width: 22px; height: 22px; }
.task-tabs { position: absolute; right: 0; top: 72px; width: 38px; border: 1px solid #aaa8ae; border-bottom: 0; }
.task-tabs button { display: grid; place-items: center; width: 100%; height: 36px; background: #d8d6da; border-bottom: 1px solid #a5a3a8; }
.task-tabs .on { height: 35px; background: #f6f5f8; }
.task-tabs svg { width: 24px; height: 24px; }
.splitter { position: absolute; left: -1px; top: 234px; width: 9px; height: 39px; display: grid; place-items: center; background: #f6f5f8; border: 1px solid #aaa8ae; border-left: 0; }
.splitter::after { content: ""; width: 6px; height: 6px; border-radius: 50%; border: 1px solid #aaa; background: #ccc; }

.doc-tabs { grid-area: 3 / 1 / 4 / 3; display: flex; padding-left: 13px; background: #faf9fb; border: solid #a5a3a9; border-width: 1px 0; }
.steps { display: flex; width: 65px; background: #a9aabf; border: 1px solid #8f90a5; }
.steps button { flex: 1; display: grid; place-items: center; border-right: 1px solid #9192a8; }
.steps svg { width: 9px; height: 9px; }
.tab { padding: 0 8px; background: #d8d6da; border-right: 1px solid #a5a3a9; line-height: 14px; }
.tab.on { padding: 0 10px 0 11px; background: #faf9fb; font-weight: 700; color: #000; }
.tab.last { padding: 0 18px 0 11px; }

/* Task pane */
.task-pane { grid-area: 1 / 3 / 4 / 4; display: flex; flex-direction: column; background: #fbf9fc; border-left: 2px solid #6b6c70; border-bottom: 2px solid #222; margin-bottom: 1px; min-height: 0; }
.task-pane header { flex: none; display: flex; align-items: center; height: 25px; padding: 0 5px 0 8px; background: #a8a8ab; border-bottom: 2px solid #111; color: #000; }
.chev { font-size: 11px; }
.task-pane h2 { flex: 1; min-width: 0; margin: 0 0 0 -4px; white-space: nowrap; font-size: 12px; line-height: 15px; }
.task-pane header svg { width: 18px; height: 18px; }
.task-pane header .pinned { width: 15px; height: 15px; margin-left: 4px; }
.update { margin: 0 15px 0 8px; padding: 31px 7px 22px 8px; display: flex; flex-direction: column; background: #fff; font: 16px/24px "Liberation Sans", Arial, sans-serif; color: #777; }
.update h3 { margin: 0 0 19px; font-size: 19px; line-height: 24px; color: #3c3c3c; }
.update p { margin: 0 0 16px; }
.update button { border-radius: 4px; line-height: 19px; }
.primary { height: 67px; margin-bottom: 4px; background: #3d91c3; color: #fff; }
.secondary { height: 45px; margin-bottom: 7px; background: #f0eff1; border: 1px solid #ceced0; color: #444; }
.update label { display: flex; gap: 15px; margin-right: -4px; }
.update input { appearance: none; flex: none; width: 20px; height: 20px; margin: 6px 0 0; background: #ececee; border: 1px solid #ccc; }

/* Status bar */
.status { flex: none; height: 14px; display: flex; align-items: flex-start; padding-top: 3px; background: #f6f5f8; overflow: hidden; }
.product { margin-left: -3px; flex: 1; white-space: nowrap; }
.warn { width: 20px; height: 20px; margin: -3px 54px 0 0; }
.units { width: 52px; }
.caret { width: 22px; }
.tag { width: 20px; height: 20px; margin: -2px 2px 0 0; }
```
